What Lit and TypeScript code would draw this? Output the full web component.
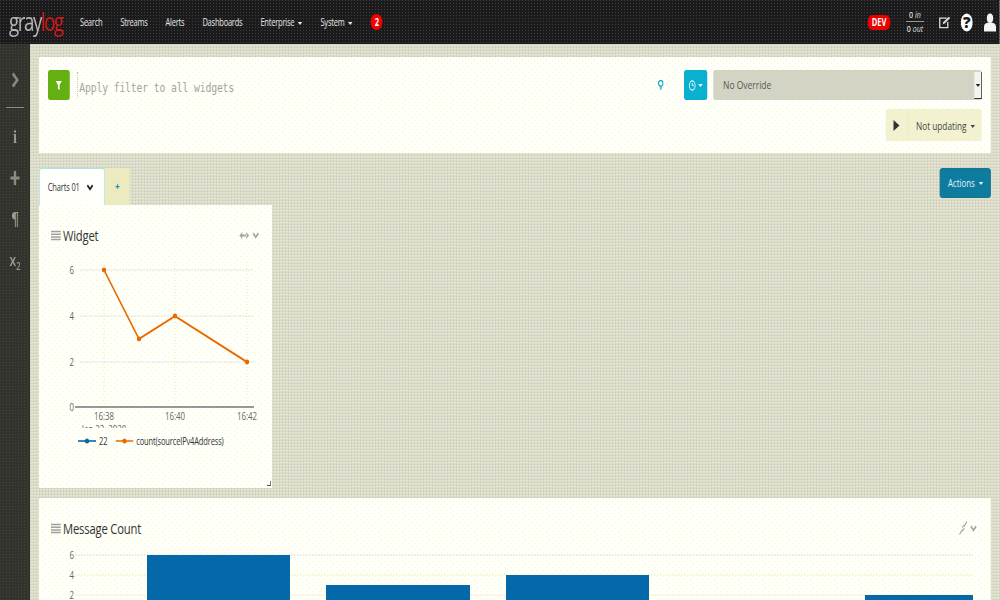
import { LitElement, html, css, svg } from "lit";
import { customElement } from "lit/decorators.js";

const S = 0.75;
const K = 1 / S;

const linePts = [[104, 270], [139, 339], [175, 316], [247, 362]];
const bars = [[147, 290, 555], [326, 470, 585], [506, 649, 575], [865, 973, 595]];

@customElement("app-root")
export class AppRoot extends LitElement {
  static styles = css`
    :host { display: block; width: 1000px; height: 600px; overflow: hidden; background: #d6d6c4; }
    .stage { width: ${1000 * K}px; height: 600px; transform: scaleX(${S}); transform-origin: left top;
      font-family: "Open Sans", "Liberation Sans", sans-serif; display: flex; flex-direction: column; overflow: hidden; }
    .nav { height: 44px; flex: none; display: flex; align-items: center; color: #e6e6e6; font-size: 10px; letter-spacing: -.3px;
      background-color: #1b1b1b;
      background-image: conic-gradient(at 1px 1px, transparent 75%, #3c3c46 0);
      background-size: 4px 3px; }
    .logo { margin-left: ${9 * K}px; width: ${71 * K}px; font-size: 25px; letter-spacing: -1.9px; color: #b4b4b4; font-weight: 400; position: relative; top: -1px; }
    .logo b { color: #d81818; font-weight: 400; }
    .links { display: flex; gap: ${18 * K}px; align-items: center; }
    .caret { display: inline-block; width: 0; height: 0; border: 3px solid transparent; border-top-color: currentColor; border-bottom: 0; margin-left: 5px; vertical-align: middle; }
    .badge { width: ${12 * K}px; height: 16px; border-radius: 50%; background: #f00000; color: #fff; font-size: 10px; font-weight: 700; display: flex; align-items: center; justify-content: center; }
    .right { margin-left: auto; display: flex; align-items: center; padding-right: ${4 * K}px; letter-spacing: 0; }
    .dev { width: ${22 * K}px; height: 15px; border-radius: 6px; background: #e80000; color: #fff; font-size: 10px; font-weight: 700; display: flex; align-items: center; justify-content: center; }
    .tp { margin-left: ${16 * K}px; width: ${18 * K}px; font-size: 9.5px; line-height: 12px; text-align: center; color: #ddd; font-style: italic; }
    .tp div:first-child { border-bottom: 1px solid #999; margin-bottom: 1px; }
    .tp span { font-style: normal; font-weight: 600; }
    .ic { display: block; flex: none; }
    .i1 { margin-left: ${14 * K}px; width: ${12 * K}px; height: 14px; }
    .i2 { margin-left: ${11 * K}px; width: ${12 * K}px; height: 19px; }
    .body { flex: 1; display: flex; min-height: 0; }
    .side { width: ${30 * K}px; flex: none; color: #9a9a8e; position: relative; display: flex; flex-direction: column; align-items: center;
      background-color: #33332e;
      background-image: conic-gradient(at 1px 1px, transparent 75%, #44443c 0);
      background-size: 4px 3px; }
    .sb { display: flex; align-items: center; justify-content: center; flex: none; }
    .sb.chev { margin-top: 24px; height: 24px; }
    .rule { width: ${18 * K}px; height: 1px; background: #8b8b80; margin-top: 15px; flex: none; }
    .sb.info { margin-top: 16px; height: 26px; font: 700 19px "Liberation Serif", serif; }
    .sb.plus { margin-top: 18px; height: 20px; }
    .sb.para { margin-top: 18px; height: 26px; font: 700 19px "Liberation Serif", serif; }
    .sb.sub { margin-top: 16px; height: 24px; font-size: 16px; font-weight: 600; }
    .sb.sub span { display: block; }
    .sb sub { font-size: 10px; line-height: 0; }
    .main { flex: 1; min-width: 0; padding: 13px ${9 * K}px 0; display: flex; flex-direction: column;
      background-color: #dcdccb;
      background-image: conic-gradient(at 1px 1px, transparent 75%, #c4c4c0 0), conic-gradient(at 1px 1px, transparent 75%, #f0f0c8 0);
      background-size: ${3 * K}px 3px; background-position: 0 0, ${1.5 * K}px 1px; }
    .card { background-color: #fffffc;
      background-image: conic-gradient(at 1px 1px, transparent 75%, #fbf9a8 0), conic-gradient(at 1px 1px, transparent 75%, #fbf9a8 0);
      background-size: ${6 * K}px 6px; background-position: 0 0, ${3 * K}px 3px; }
    .top { height: 96px; flex: none; padding: 13px ${9 * K}px 0; box-sizing: border-box; margin-right: 0; }
    .row1 { display: flex; align-items: center; height: 30px; }
    .filter { width: ${22 * K}px; height: 30px; border-radius: 3px; background: #64b010; display: flex; align-items: center; justify-content: center; flex: none; }
    .ph { margin-left: ${7 * K}px; padding-left: ${1.5 * K}px; height: 26px; border-left: 1px dotted #bbb; font: 13px/32px "DejaVu Sans Mono", "Liberation Mono", monospace; color: #a4a49c; flex: 1; letter-spacing: -.18px; }
    .bulb { width: ${6 * K}px; height: 10px; flex: none; margin-right: ${20 * K}px; }
    .tr { width: ${23 * K}px; height: 30px; border-radius: 3px; background: #0ab0d0; color: #fff; display: flex; align-items: center; justify-content: center; gap: 2px; flex: none; }
    .nomargin { margin: 0; }
    .sel { margin-left: ${6 * K}px; width: ${269 * K}px; height: 30px; border-radius: 3px; background: #d4d4c4; color: #555; font-size: 11.3px; line-height: 30px; padding-left: ${10 * K}px; box-sizing: border-box; position: relative; flex: none; }
    .sel i.arrow { position: absolute; right: 0; top: 2px; bottom: 1px; width: ${8 * K}px; border-right: 1px solid #333; border-bottom: 1px solid #333; background: #f4f4ee; color: #222; display: flex; align-items: center; justify-content: center; box-sizing: border-box; }
    .row2 { display: flex; justify-content: flex-end; margin-top: 9px; }
    .upd { width: ${96 * K}px; height: 32px; border-radius: 3px; background: #f2f2d0; color: #444; font-size: 11px; display: flex; align-items: center; box-sizing: border-box; }
    .play { width: ${22 * K}px; height: 32px; display: flex; align-items: center; justify-content: center; border-right: 1px solid #e8e8d0; flex: none; box-sizing: border-box; }
    .upd span { margin-left: ${8 * K}px; white-space: nowrap; }
    .tabs { margin-top: 15px; height: 37px; display: flex; align-items: flex-start; flex: none; }
    .tab { height: 37px; width: ${66 * K}px; box-sizing: border-box; border: 1px solid #a8e4ea; border-bottom: 0; border-radius: 4px 4px 0 0; font-size: 10px; letter-spacing: -.2px; color: #333; display: flex; align-items: center; padding-left: ${8 * K}px; background-color: #fffffc; gap: ${6 * K}px; }
    .addtab { height: 37px; width: ${25 * K}px; background: #ecebc0; color: #1488a8; font-size: 10px; font-weight: 700; display: flex; align-items: center; justify-content: center; padding-bottom: 2px; box-sizing: border-box; }
    .act { margin-left: auto; width: ${51 * K}px; height: 30px; border-radius: 3px; background: #0e7c9f; color: #e4f4f8; font-size: 10.5px; display: flex; align-items: center; justify-content: center; border: 1px solid #0b6c8c; box-sizing: border-box; }
    .widget { width: ${233 * K}px; height: 283px; flex: none; padding: 19px 0 0; box-sizing: border-box; position: relative; }
    .title { height: 22px; display: flex; align-items: center; padding: 0 ${12 * K}px; font-size: 15px; letter-spacing: -.25px; color: #333; }
    .burger { width: ${10 * K}px; height: 11px; margin-right: ${2 * K}px; flex: none; }
    .tools { margin-left: auto; display: flex; align-items: center; }
    .chart { display: block; margin-top: 10px; overflow: hidden; }
    .legend { height: 26px; display: flex; align-items: center; padding-left: ${39 * K}px; font-size: 10px; letter-spacing: -.2px; color: #333; }
    .lk { width: ${18 * K}px; height: 6px; flex: none; margin-right: ${3 * K}px; }
    .lk2 { margin-left: ${8 * K}px; }
    .handle { position: absolute; right: 2px; bottom: 2px; width: 5px; height: 5px; border-right: 1px solid #555; border-bottom: 1px solid #555; box-sizing: border-box; }
    .wide { margin-top: 10px; flex: none; height: 200px; padding: 19px 0 0; box-sizing: border-box; }
    .wide .chart { margin-top: 0; }
    .wide .tools { margin-right: ${1 * K}px; }
    .qm { font-size: 15px; font-weight: 800; fill: #1b1b1b; }
    text { font-family: "Open Sans", "Liberation Sans", sans-serif; font-size: 10.5px; fill: #666; }
  `;

  private x(v: number) { return (v - 39) * K; }

  private chevron(c: string, w = 10, h = 8) {
    return html`<svg class="ic" width=${w * K} height=${h} viewBox="0 0 10 8"><path d="M1 1.5 L5 6 L9 1.5" fill="none" stroke=${c} stroke-width="2.4"/></svg>`;
  }
  private burger() {
    return html`<svg class="burger ic" viewBox="0 0 10 11" preserveAspectRatio="none"><path d="M0 1.5H10M0 4.2H10M0 6.9H10M0 9.6H10" stroke="#a0a0a0" stroke-width="1.5"/></svg>`;
  }

  private widgetChart() {
    const t = 256;
    const y = (v: number) => v - t;
    const pts = linePts.map(p => `${this.x(p[0])},${y(p[1])}`).join(" ");
    return html`<svg class="chart" width=${233 * K} height="172">
      ${[[270, "6"], [316, "4"], [362, "2"]].map(([g, l]) => svg`
        <line x1=${this.x(80)} x2=${this.x(254)} y1=${y(g as number)} y2=${y(g as number)} stroke="#c9c9dc" stroke-dasharray="1 1"/>
        <text x=${this.x(74)} y=${y(g as number) + 4} text-anchor="end">${l}</text>`)}
      ${[104, 175, 247].map(v => svg`<line x1=${this.x(v)} x2=${this.x(v)} y1=${y(262)} y2=${y(407)} stroke="#e6e6a8" stroke-dasharray="1 2"/>`)}
      <text x=${this.x(74)} y=${y(411)} text-anchor="end">0</text>
      <line x1=${this.x(75)} x2=${this.x(254)} y1=${y(407)} y2=${y(407)} stroke="#333" stroke-width="1.2"/>
      ${[[104, "16:38"], [175, "16:40"], [247, "16:42"]].map(([v, l]) => svg`<text x=${this.x(v as number)} y=${y(420)} text-anchor="middle">${l}</text>`)}
      <text x=${this.x(104)} y=${y(433)} text-anchor="middle">Jan 22, 2020</text>
      <polyline points=${pts} fill="none" stroke="#e86a00" stroke-width="2"/>
      ${linePts.map(p => svg`<ellipse cx=${this.x(p[0])} cy=${y(p[1])} rx=${2.2 * K} ry="2.4" fill="#e86a00"/>`)}
    </svg>`;
  }

  private barChart() {
    const t = 539;
    const y = (v: number) => v - t;
    return html`<svg class="chart" width=${952 * K} height="61">
      ${[[555, "6"], [575, "4"], [595, "2"]].map(([g, l]) => svg`
        <line x1=${this.x(75)} x2=${this.x(973)} y1=${y(g as number)} y2=${y(g as number)} stroke=${g === 555 ? "#c9c9dc" : "#e4e490"} stroke-dasharray="1 1"/>
        <text x=${this.x(74)} y=${y(g as number) + 4} text-anchor="end">${l}</text>`)}
      ${bars.map(b => svg`<rect x=${this.x(b[0])} width=${(b[1] - b[0]) * K} y=${y(b[2])} height="80" fill="#0568a8"/>`)}
    </svg>`;
  }

  render() {
    return html`<div class="stage">
      <div class="nav">
        <div class="logo">gray<b>log</b></div>
        <div class="links">
          <span>Search</span><span>Streams</span><span>Alerts</span><span>Dashboards</span>
          <span>Enterprise<i class="caret"></i></span><span>System<i class="caret"></i></span>
          <div class="badge">2</div>
        </div>
        <div class="right">
          <div class="dev">DEV</div>
          <div class="tp"><div><span>0</span> in</div><div><span>0</span> out</div></div>
          <svg class="ic i1" viewBox="0 0 12 16" preserveAspectRatio="none"><path d="M8.5 3.5H1.5V14.5H9.5V8" fill="none" stroke="#ddd" stroke-width="1.3"/><path d="M4.5 10.5L5 8L10.5 2L12 3.5L6.5 9.8Z" fill="#ddd"/></svg>
          <svg class="ic i2" viewBox="0 0 12 19" preserveAspectRatio="none"><ellipse cx="6" cy="9.5" rx="6" ry="9" fill="#fff"/><text class="qm" x="6" y="15" text-anchor="middle">?</text></svg>
          <svg class="ic i2" viewBox="0 0 12 16" preserveAspectRatio="none"><ellipse cx="6" cy="4.5" rx="3.2" ry="4" fill="#f4f4f4"/><path d="M0 15.5V11.5C0 9.5 2 8.5 4 8.3H8C10 8.5 12 9.5 12 11.5V15.5Z" fill="#f4f4f4"/></svg>
        </div>
      </div>
      <div class="body">
        <div class="side">
          <div class="sb chev"><svg width=${9 * K} height="16" viewBox="0 0 9 16"><path d="M1.5 1.5L7.5 8L1.5 14.5" fill="none" stroke="#8b8b80" stroke-width="3"/></svg></div>
          <div class="rule"></div>
          <div class="sb info">i</div>
          <div class="sb plus"><svg width=${12 * K} height="14" viewBox="0 0 12 14"><path d="M6 0V14M0 7H12" stroke="#8b8b80" stroke-width="3.2"/></svg></div>
          <div class="sb para">¶</div>
          <div class="sb sub"><span>x<sub>2</sub></span></div>
        </div>
        <div class="main">
          <div class="card top">
            <div class="row1">
              <div class="filter"><svg width=${8 * K} height="9" viewBox="0 0 9 10"><path d="M0 0H9L5.7 4.5V10L3.3 8.5V4.5Z" fill="#fff"/></svg></div>
              <div class="ph">Apply filter to all widgets</div>
              <svg class="bulb ic" viewBox="0 0 8 12" preserveAspectRatio="none"><ellipse cx="4" cy="4" rx="3" ry="3.4" fill="none" stroke="#14aac8" stroke-width="1.5"/><path d="M2.5 8.5H5.5M2.8 10.5H5.2" stroke="#14aac8" stroke-width="1.5"/></svg>
              <div class="tr"><svg width=${9 * K} height="11" viewBox="0 0 9 11"><ellipse cx="4.5" cy="5.5" rx="3.8" ry="4.6" fill="none" stroke="#fff" stroke-width="1.1"/><path d="M4.5 3V5.6H6.5" fill="none" stroke="#fff"/></svg><i class="caret nomargin"></i></div>
              <div class="sel">No Override<i class="arrow"><i class="caret nomargin"></i></i></div>
            </div>
            <div class="row2"><div class="upd"><div class="play"><svg width=${8 * K} height="11" viewBox="0 0 8 11"><path d="M0 0L8 5.5L0 11Z" fill="#333"/></svg></div><span>Not updating<i class="caret"></i></span></div></div>
          </div>
          <div class="tabs">
            <div class="tab">Charts 01 ${this.chevron("#222", 9, 7)}</div>
            <div class="addtab">+</div>
            <div class="act">Actions<i class="caret"></i></div>
          </div>
          <div class="card widget">
            <div class="title">${this.burger()}Widget
              <div class="tools">
                <svg class="ic" width=${13 * K} height="9" viewBox="0 0 13 9"><path d="M0 4.5L4 1V8ZM13 4.5L9 1V8ZM3 3.5H10V5.5H3Z" fill="#a8a8a0"/></svg>
                ${this.chevron("#a8a8a0", 9, 7)}
              </div>
            </div>
            ${this.widgetChart()}
            <div class="legend">
              <svg class="lk ic" viewBox="0 0 18 6" preserveAspectRatio="none"><path d="M0 3H18" stroke="#0568a8" stroke-width="1.6"/><ellipse cx="9" cy="3" rx="2.2" ry="2.5" fill="#0568a8"/></svg>22
              <svg class="lk lk2 ic" viewBox="0 0 18 6" preserveAspectRatio="none"><path d="M0 3H18" stroke="#e86a00" stroke-width="1.6"/><ellipse cx="9" cy="3" rx="2.2" ry="2.5" fill="#e86a00"/></svg>count(sourceIPv4Address)
            </div>
            <div class="handle"></div>
          </div>
          <div class="card wide">
            <div class="title">${this.burger()}Message Count
              <div class="tools">
                <svg class="ic" width=${11 * K} height="14" viewBox="0 0 11 14"><path d="M0 13L4 8H6L1 14ZM11 1L7 6H5L10 0ZM3 6.5H6V3.5ZM8 7.5H5V10.5Z" fill="#a8a8a4"/></svg>
                ${this.chevron("#a8a8a0", 9, 7)}
              </div>
            </div>
            ${this.barChart()}
          </div>
        </div>
      </div>
    </div>`;
  }
}
